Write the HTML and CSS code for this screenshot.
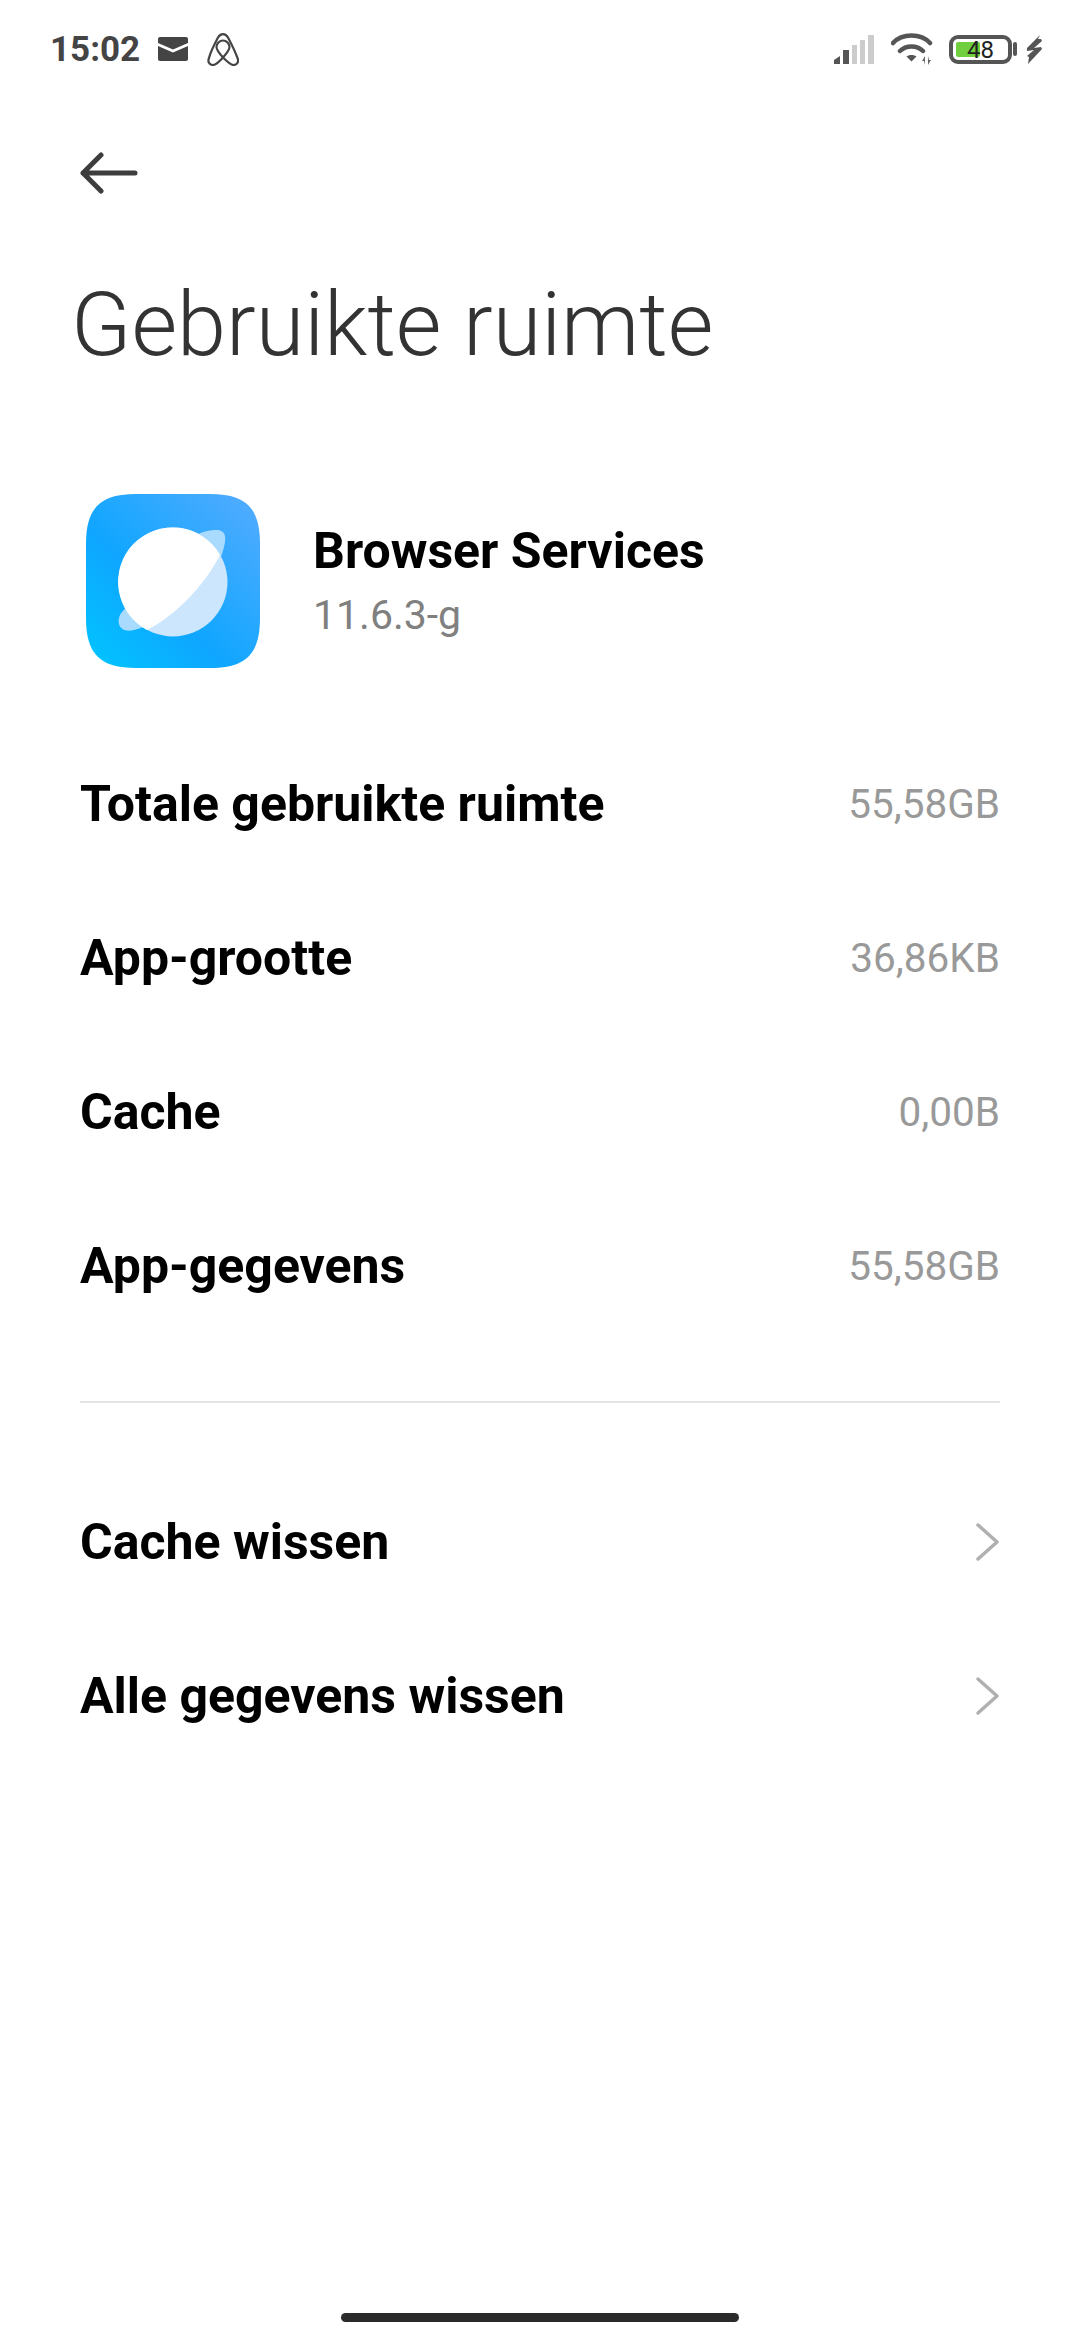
FILE: index.html
```html
<!DOCTYPE html>
<html lang="en">
<head>
    <meta charset="UTF-8">
    <meta name="viewport" content="width=device-width, initial-scale=1.0">
    <title>Gebruikte ruimte</title>
    <link rel="stylesheet" href="styles.css">
</head>
<body>
    <div class="phone">
        <header class="status-bar">
            <div class="status-left">
                <span class="clock">15:02</span>
                <svg class="icon-mail" width="30" height="24" viewBox="0 0 30 24">
                    <path d="M2 0h26a2 2 0 0 1 2 2v4L15 12.500 0 6V2a2 2 0 0 1 2-2zM0 9l15 6.500L30 9v13a2 2 0 0 1-2 2H2a2 2 0 0 1-2-2z" fill="#444"/>
                </svg>
                <svg class="icon-airbnb" width="32" height="33" viewBox="0 0 32 33">
                    <path d="M16 24.500C12 20 9.500 17 9.500 14a6.500 6.500 0 0 1 13 0c0 3-2.500 6-6.500 10.500c-4 4.500-7 7.500-10 7.500c-4 0-5.500-3.500-4-7C3 21 7 12 11 4.500c2.500-4.500 7.500-4.500 10 0c4 7.500 8 16.500 9.500 20.500c1.500 3.500 0 7-4 7c-3 0-6-3-10.500-7.500z" fill="none" stroke="#444" stroke-width="2.200"/>
                </svg>
            </div>
            <div class="status-right">
                <svg class="icon-signal" width="40" height="29" viewBox="0 0 40 29">
                    <path d="M0 29v-4l6-4v8z" fill="#555"/>
                    <rect x="9" y="15" width="6" height="14" fill="#555"/>
                    <rect x="18" y="10" width="5" height="19" fill="#ccc"/>
                    <rect x="26" y="5" width="5" height="24" fill="#ccc"/>
                    <rect x="34" y="0" width="6" height="29" fill="#ccc"/>
                </svg>
                <svg class="icon-wifi" width="42" height="32" viewBox="0 0 42 32">
                    <path d="M2 10C11 0 30 0 39 10M9 18c6-6 17-6 23 0" fill="none" stroke="#555" stroke-width="4.500" stroke-linecap="round"/>
                    <path d="M20.500 22c2 0 3.500 .5 5 1.500l-5 5-5-5c1.500-1 3-1.500 5-1.500z" fill="#555"/>
                    <path d="M34 32v-9l-3 5h2zM37 23v9l3-5h-2z" fill="#666"/>
                </svg>
                <div class="battery">
                    <div class="battery-body">
                        <div class="battery-fill"></div>
                        <span class="battery-text">48</span>
                    </div>
                    <div class="battery-cap"></div>
                </div>
                <svg class="icon-bolt" width="17" height="29" viewBox="0 0 17 29">
                    <path d="M14 0L1 13v3l7-1-7 6 2 1-1 7 14-15-1-2-7 1 8-7-1-2h-3z" fill="#555"/>
                </svg>
            </div>
        </header>

        <div class="back-row">
            <svg width="58" height="44" viewBox="0 0 58 44">
                <path d="M3 22h52M21 4L3 22l18 18" fill="none" stroke="#3d3d3d" stroke-width="5" stroke-linecap="round" stroke-linejoin="round"/>
            </svg>
        </div>

        <h1 class="page-title">Gebruikte ruimte</h1>

        <section class="app-info">
            <svg class="app-icon" width="174" height="174" viewBox="0 0 174 174">
                <defs>
                    <linearGradient id="tile" x1="0" y1="1" x2="1" y2="0">
                        <stop offset="0" stop-color="#00c6ff"/>
                        <stop offset="0.4" stop-color="#0fa6ff"/>
                        <stop offset="1" stop-color="#55acff"/>
                    </linearGradient>
                </defs>
                <path d="M50 0h74c36 0 50 14 50 50v74c0 36-14 50-50 50H50C14 174 0 160 0 124V50C0 14 14 0 50 0z" fill="url(#tile)"/>
                <path d="M36 118C30 125 31 140 48 136C80 128 124 92 136 60C142 42 140 35 128 36C118 37 112 40 105 43z" fill="#a9dbff"/>
                <circle cx="87" cy="88" r="54.500" fill="#cbe6fd"/>
                <path d="M61 136A54.500 54.500 0 1 1 134 61C118 92 90 121 61 136z" fill="#fff"/>
            </svg>
            <div class="app-text">
                <div class="app-name">Browser Services</div>
                <div class="app-version">11.6.3-g</div>
            </div>
        </section>

        <section class="size-list">
            <div class="row"><span class="row-label">Totale gebruikte ruimte</span><span class="row-value">55,58GB</span></div>
            <div class="row"><span class="row-label">App-grootte</span><span class="row-value">36,86KB</span></div>
            <div class="row"><span class="row-label">Cache</span><span class="row-value">0,00B</span></div>
            <div class="row"><span class="row-label">App-gegevens</span><span class="row-value">55,58GB</span></div>
        </section>

        <hr class="divider">

        <section class="action-list">
            <div class="row">
                <span class="row-label">Cache wissen</span>
                <svg class="chevron" width="26" height="40" viewBox="0 0 26 40"><path d="M4 3l19 17L4 37" fill="none" stroke="#b0b0b0" stroke-width="3.500" stroke-linecap="round" stroke-linejoin="round"/></svg>
            </div>
            <div class="row">
                <span class="row-label">Alle gegevens wissen</span>
                <svg class="chevron" width="26" height="40" viewBox="0 0 26 40"><path d="M4 3l19 17L4 37" fill="none" stroke="#b0b0b0" stroke-width="3.500" stroke-linecap="round" stroke-linejoin="round"/></svg>
            </div>
        </section>

        <div class="home-bar"></div>
    </div>
</body>
</html>
```
FILE: styles.css
```css
html, body {
    margin: 0;
    padding: 0;
    background-color: #fff;
}
.phone {
    width: 1080px;
    height: 2340px;
    display: flex;
    flex-direction: column;
    font-family: Roboto, "Noto Sans", sans-serif;
    color: #000;
    overflow: hidden;
}
.status-bar {
    height: 98px;
    padding: 0 37px 0 50px;
    display: flex;
    justify-content: space-between;
    align-items: center;
}
.status-left, .status-right {
    display: flex;
    align-items: center;
}
.clock {
    font-size: 35px;
    font-weight: 700;
    color: #444;
}
.icon-mail {
    margin-left: 18px;
}
.icon-airbnb {
    margin-left: 19px;
}
.icon-wifi {
    margin-left: 17px;
}
.battery {
    margin-left: 16px;
    display: flex;
    align-items: center;
}
.battery-body {
    position: relative;
    width: 55px;
    height: 21px;
    border: 4px solid #555;
    border-radius: 9px;
}
.battery-fill {
    width: 24px;
    height: 15px;
    margin: 3px;
    background-color: #6fcf3f;
    border-radius: 2px;
}
.battery-text {
    position: absolute;
    left: 0;
    top: 0;
    width: 100%;
    text-align: center;
    font-size: 24px;
    line-height: 22px;
    color: #222;
}
.battery-cap {
    width: 4px;
    height: 14px;
    margin-left: 1px;
    background-color: #555;
    border-radius: 2px;
}
.icon-bolt {
    margin-left: 9px;
}
.back-row {
    height: 44px;
    margin-top: 53px;
    padding-left: 80px;
}
.page-title {
    margin: 75px 0 0 71px;
    font-size: 88.300px;
    line-height: 110px;
    font-weight: 300;
    color: #333;
}
.app-info {
    margin-top: 114px;
    padding-left: 86px;
    display: flex;
    align-items: center;
}
.app-text {
    margin-left: 53px;
    padding-bottom: 3px;
}
.app-name {
    font-size: 50px;
    line-height: 60px;
    font-weight: 700;
}
.app-version {
    margin-top: 11px;
    font-size: 41px;
    line-height: 46px;
    color: #808080;
}
.size-list {
    margin-top: 59px;
}
.row {
    height: 154px;
    padding: 0 80px;
    display: flex;
    justify-content: space-between;
    align-items: center;
}
.row-label {
    font-size: 50px;
    font-weight: 700;
}
.row-value {
    font-size: 40.500px;
    color: #999;
}
.divider {
    margin: 58px 80px 0;
    border: none;
    height: 2px;
    background-color: #e4e4e4;
}
.action-list {
    margin-top: 62px;
}
.home-bar {
    width: 398px;
    height: 9px;
    margin: auto auto 18px;
    background-color: #2b2b2b;
    border-radius: 5px;
}
```
